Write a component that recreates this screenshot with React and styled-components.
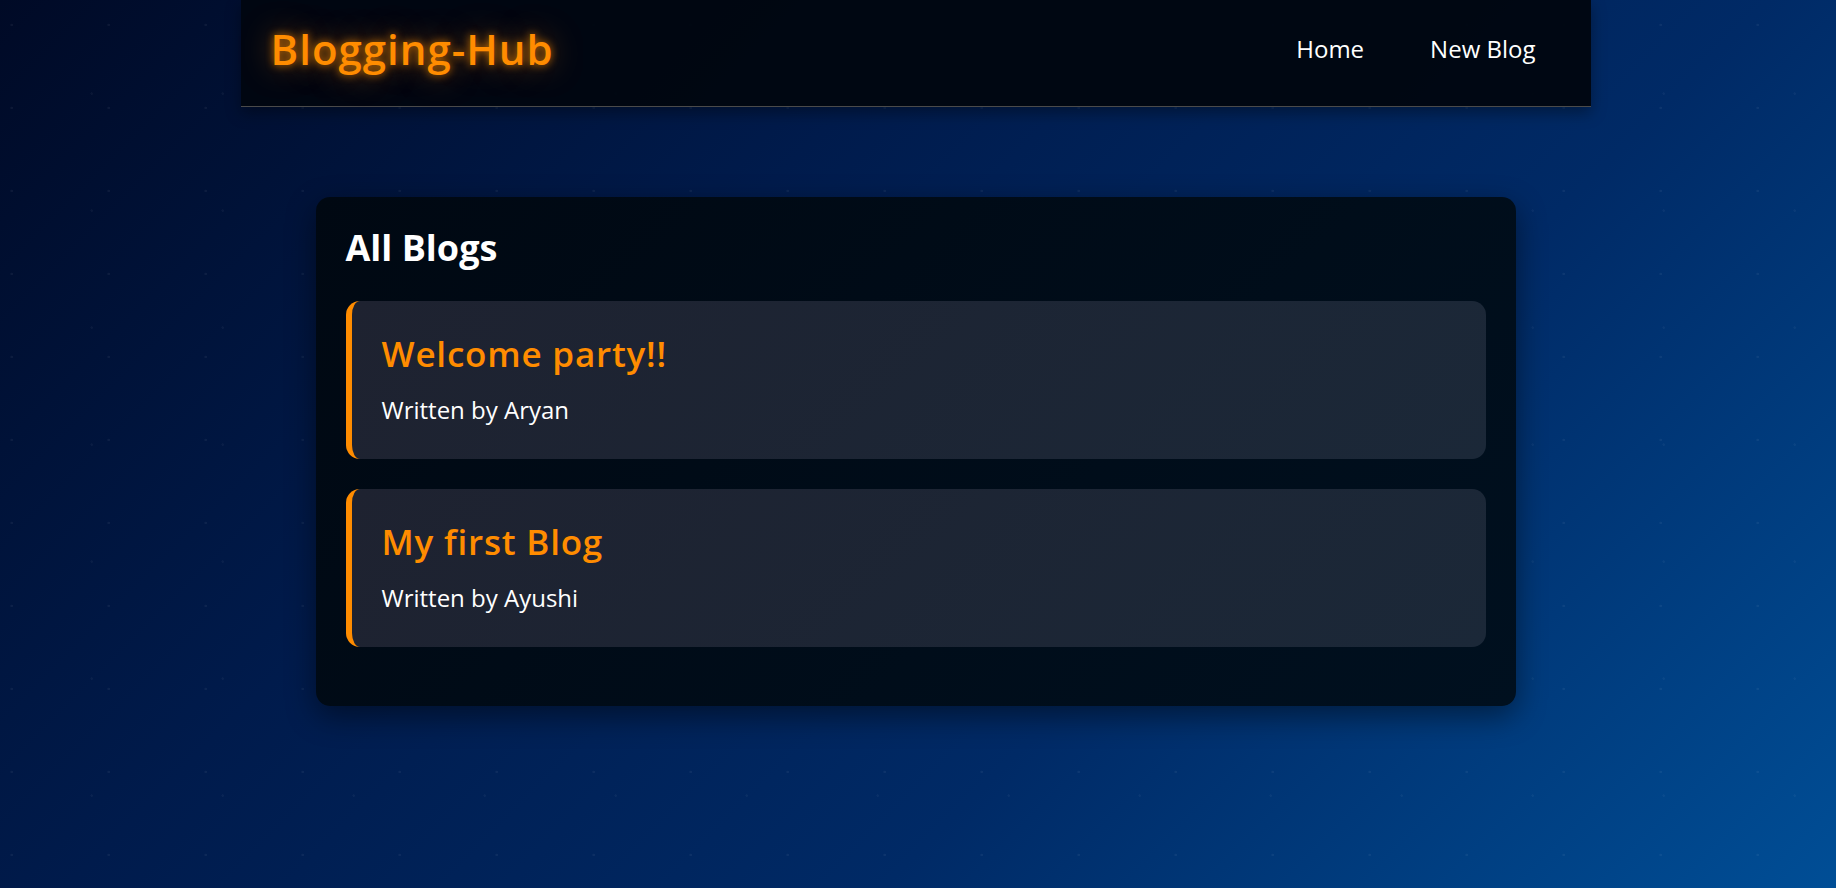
import React from 'react';
import styled, { createGlobalStyle } from 'styled-components';

const GlobalStyle = createGlobalStyle`
  html, body {
    margin: 0;
    padding: 0;
    height: 100%;
    overflow: hidden;
  }

  body {
    font-family: 'Open Sans', 'Noto Sans', sans-serif;
    color: #fff;
    background-color: #00214f;
    background-image:
      radial-gradient(circle at 12% 30%, rgba(255, 255, 255, 0.05) 0 1px, transparent 1.5px),
      radial-gradient(circle at 70% 80%, rgba(255, 255, 255, 0.04) 0 1px, transparent 1.5px),
      linear-gradient(135deg, #000a26 0%, #001b4c 35%, #002a66 65%, #004e96 100%);
    background-size: 97px 83px, 131px 117px, 100% 100%;
  }
`;

const Page = styled.div`
  height: 100vh;
  padding-right: 5px;
`;

const Navbar = styled.nav`
  width: 1350px;
  height: 107px;
  margin: 0 auto;
  box-sizing: border-box;
  padding: 0 55px 9px 30px;
  display: flex;
  align-items: center;
  justify-content: space-between;
  background: rgba(0, 6, 16, 0.96);
  border-bottom: 1px solid #4a4a4a;
  box-shadow: 0 6px 14px rgba(0, 0, 0, 0.35);
`;

const Logo = styled.h1`
  margin: 0;
  font-size: 42px;
  line-height: 1;
  font-weight: 600;
  letter-spacing: 1px;
  color: #ff8c00;
  text-shadow: 0 0 8px rgba(255, 140, 0, 0.8), 0 0 30px rgba(255, 140, 0, 0.5);
`;

const Links = styled.div`
  display: flex;
  gap: 66px;
`;

const NavLink = styled.a`
  color: #fff;
  font-size: 24px;
  line-height: 1;
  text-decoration: none;
`;

const Content = styled.main`
  width: 1200px;
  margin: 90px auto 0;
  box-sizing: border-box;
  padding: 33px 30px 29px;
  border-radius: 14px;
  background: linear-gradient(135deg, #000812 0%, #00101f 100%);
  box-shadow: 0 10px 30px rgba(0, 0, 0, 0.45);
`;

const Heading = styled.h2`
  margin: 0 0 35px;
  font-size: 36px;
  line-height: 1;
  font-weight: 700;
  color: #fff;
`;

const Preview = styled.article`
  box-sizing: border-box;
  margin-bottom: 30px;
  padding: 35px 30px 37px 30px;
  border-left: 6px solid #ff8c00;
  border-radius: 14px;
  background: linear-gradient(135deg, #1e2230 0%, #1b2838 100%);
`;

const PreviewTitle = styled.h3`
  margin: 0 0 27px;
  font-size: 35px;
  line-height: 1;
  font-weight: 600;
  letter-spacing: 0.8px;
  color: #ff8c00;
`;

const Author = styled.p`
  margin: 0;
  font-size: 24px;
  line-height: 1;
  color: #fff;
`;

const blogs = [
  { id: 1, title: 'Welcome party!!', author: 'Aryan' },
  { id: 2, title: 'My first Blog', author: 'Ayushi' },
];

export default function App() {
  return (
    <Page>
      <GlobalStyle />
      <Navbar>
        <Logo>Blogging-Hub</Logo>
        <Links>
          <NavLink href="#">Home</NavLink>
          <NavLink href="#">New Blog</NavLink>
        </Links>
      </Navbar>
      <Content>
        <Heading>All Blogs</Heading>
        {blogs.map((blog) => (
          <Preview key={blog.id}>
            <PreviewTitle>{blog.title}</PreviewTitle>
            <Author>Written by {blog.author}</Author>
          </Preview>
        ))}
      </Content>
    </Page>
  );
}
